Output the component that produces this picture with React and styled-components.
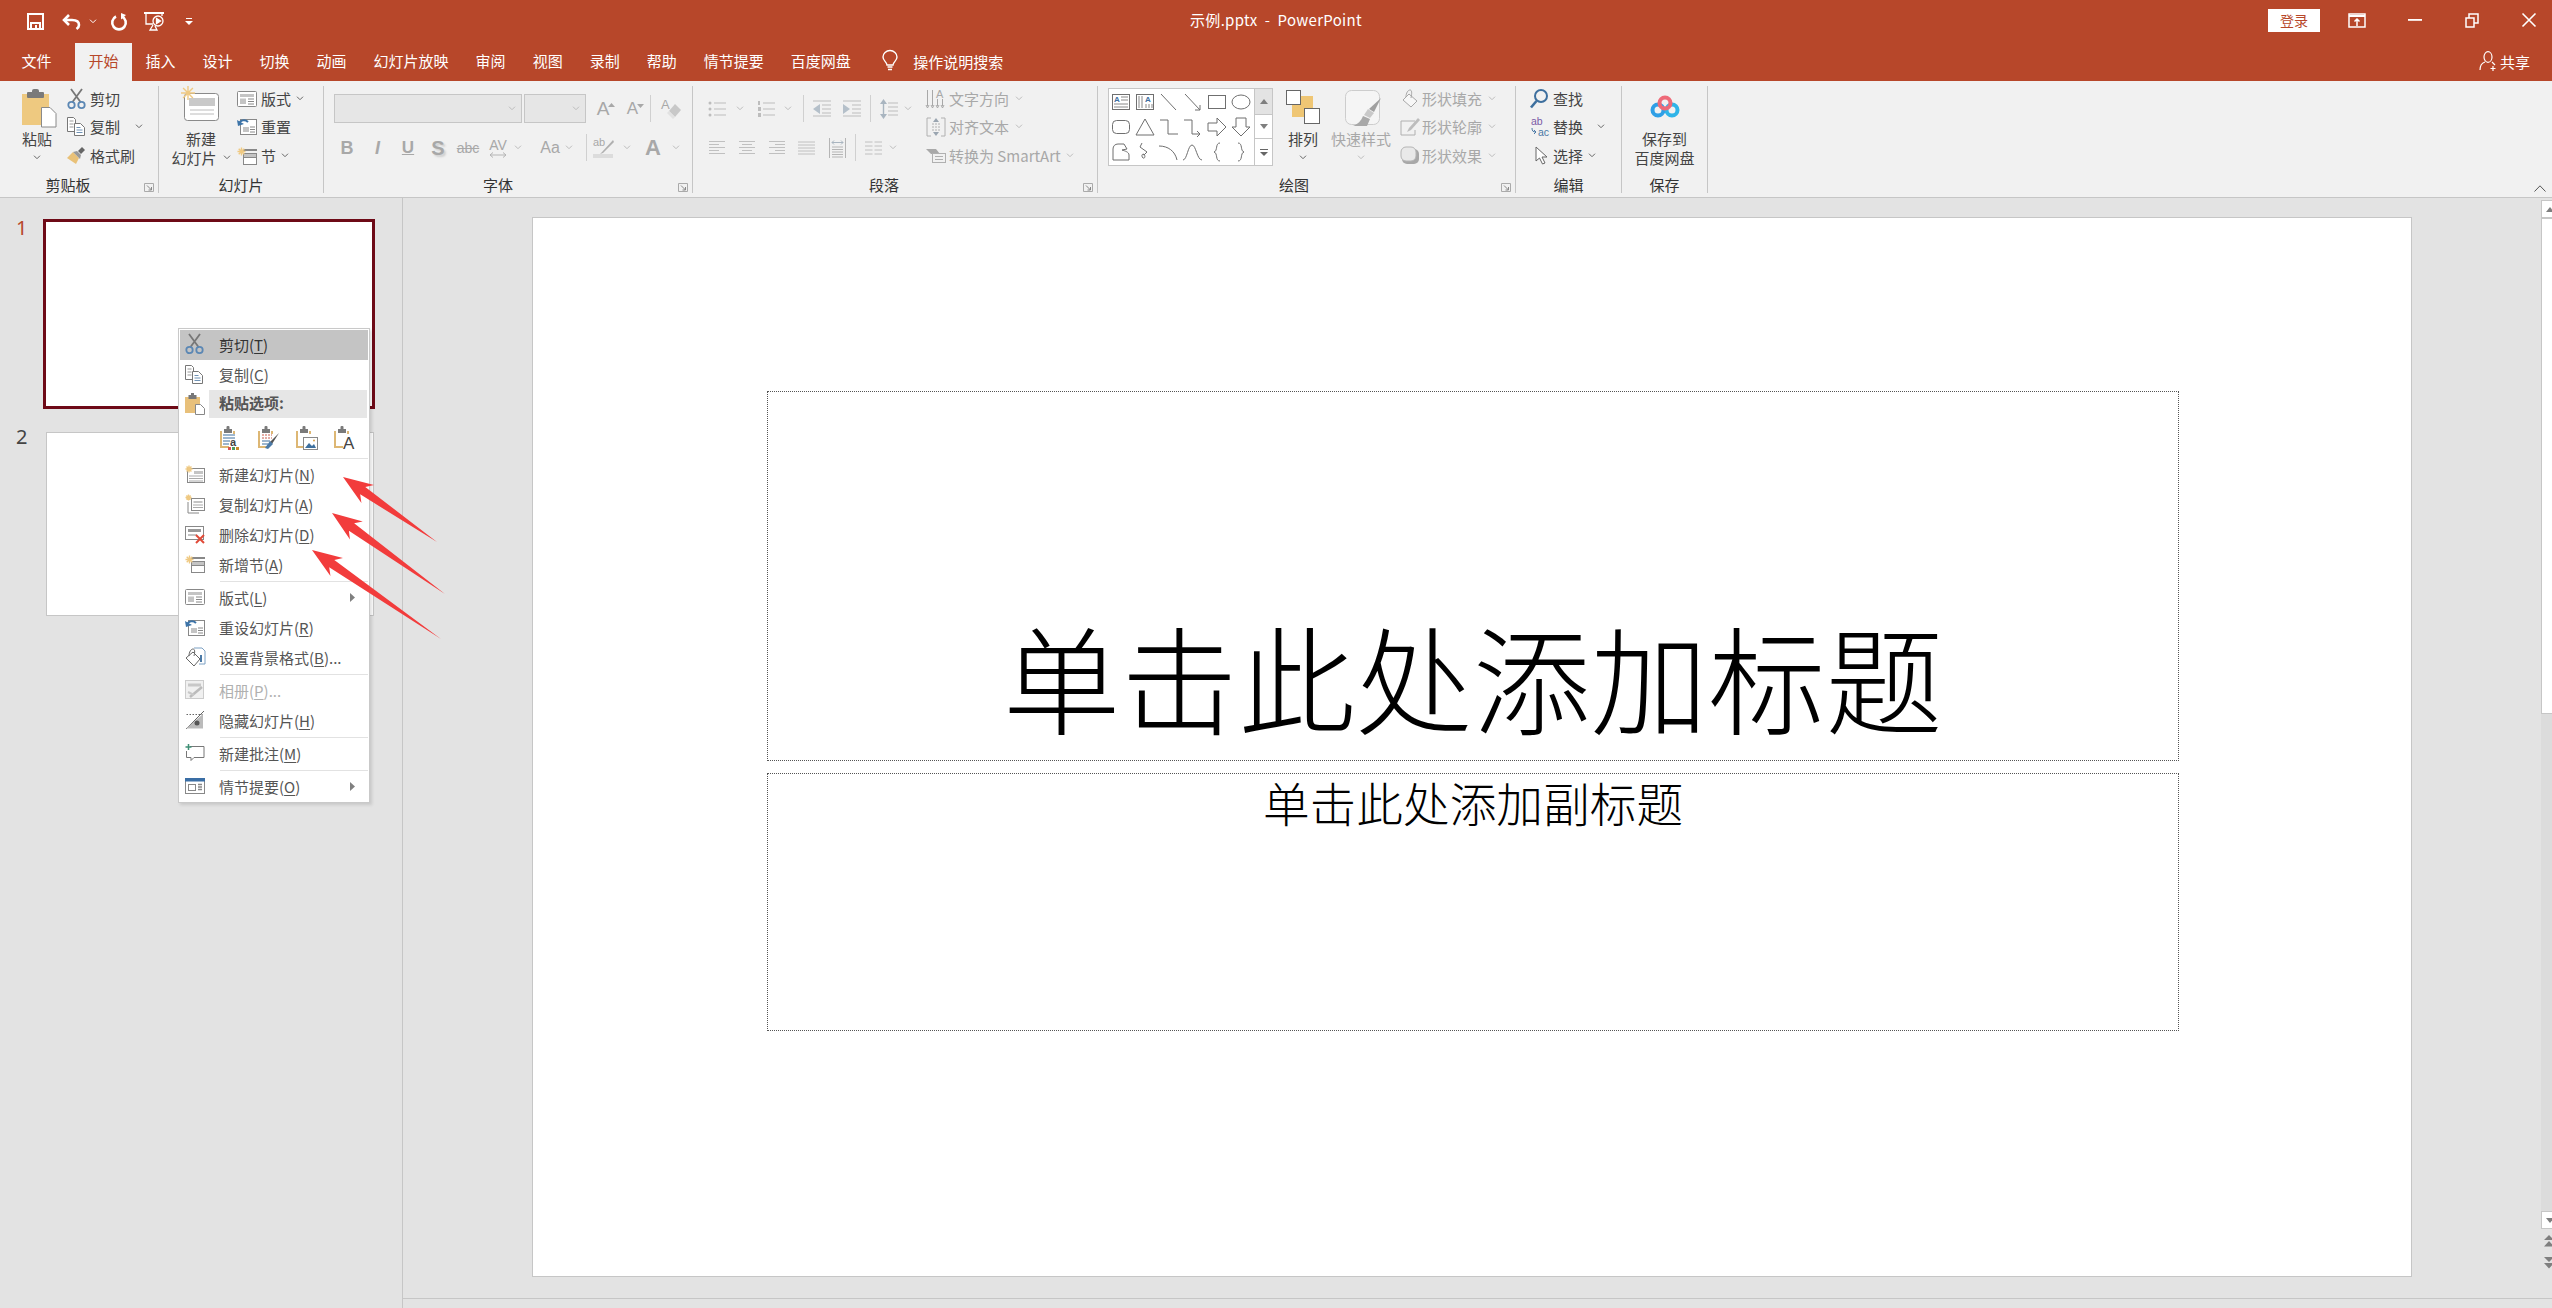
import React from "react";
import styled, { createGlobalStyle } from "styled-components";

const FONT = `"Noto Sans CJK SC","Noto Sans",sans-serif`;
const RUST = "#b7472a";
const LINE = "#c6c6c6";
const OFF = "#a8a8a8";
const ON = "#444";

const Global = createGlobalStyle`
  html,body{margin:0;padding:0;background:#e3e3e3;overflow:hidden;}
  *{box-sizing:border-box;}
`;

const Page = styled.div`
  width:2552px;height:1308px;position:relative;overflow:hidden;display:flex;flex-direction:column;
  font-family:${FONT};font-size:15px;color:${ON};background:#e3e3e3;
`;
const Ico = styled.svg`display:block;flex-shrink:0;overflow:visible;`;

/* ---------- title bar ---------- */
const TitleBar = styled.header`
  height:43px;background:${RUST};color:#fff;display:grid;grid-template-columns:1fr auto 1fr;align-items:center;
`;
const QuickAccess = styled.div`display:flex;align-items:center;padding-left:27px;`;
const QuickSlot = styled.span`display:flex;margin-left:${p=>p.$ml||0}px;`;
const DocTitle = styled.div`font-size:15px;line-height:20px;margin-top:-3px;white-space:pre;letter-spacing:.3px;`;
const WindowControls = styled.div`display:flex;align-items:center;justify-content:flex-end;padding-right:16px;`;
const SignIn = styled.button`
  width:52px;height:23px;border:0;background:#fff;color:${RUST};font:14px/23px ${FONT};padding:0;margin-top:-3px;
`;
const ControlSlot = styled.span`display:flex;margin-left:${p=>p.$ml}px;margin-top:-3px;`;

/* ---------- tab row ---------- */
const TabBar = styled.nav`height:38px;background:${RUST};display:flex;align-items:stretch;padding-left:8px;position:relative;`;
const Tab = styled.div`
  padding:0 13.5px;line-height:36px;white-space:nowrap;color:${p=>p.$active?RUST:"#fff"};
  background:${p=>p.$active?"#f1f1f1":"transparent"};margin-right:${p=>p.$mr||0}px;
`;
const SearchTell = styled.div`display:flex;align-items:center;margin-left:18px;color:#fff;gap:15px;height:36px;`;
const ShareBox = styled.div`margin-left:auto;display:flex;align-items:center;color:#fff;gap:2px;padding-right:22px;height:36px;`;

/* ---------- ribbon ---------- */
const Ribbon = styled.section`
  height:117px;background:#f1f1f1;border-bottom:1px solid ${LINE};display:flex;align-items:flex-start;padding:5px 6px 0 0;
`;
const Group = styled.div`
  width:${p=>p.$w}px;height:107px;border-right:1px solid ${LINE};flex-shrink:0;position:relative;display:flex;flex-direction:column;
`;
const GroupBody = styled.div`height:90px;flex-shrink:0;display:flex;align-items:flex-start;`;
const GroupLabel = styled.div`
  line-height:18px;height:18px;text-align:center;padding-right:${p=>p.$pr||0}px;color:#333;
`;
const Launcher = styled.span`position:absolute;right:4px;bottom:1px;display:flex;`;
const Big = styled.div`
  width:${p=>p.$w}px;margin-left:${p=>p.$ml||0}px;margin-top:-1px;display:flex;flex-direction:column;align-items:center;flex-shrink:0;
  color:${p=>p.$off?OFF:ON};
`;
const BigLine = styled.div`height:18.5px;line-height:18px;display:flex;align-items:center;white-space:nowrap;gap:${p=>p.$gap||0}px;`;
const Stack = styled.div`
  margin-left:${p=>p.$ml||0}px;display:grid;grid-template-rows:25px 31px 27px;flex-shrink:0;
`;
const Row = styled.div`display:flex;align-items:center;color:${p=>p.$off?OFF:ON};white-space:nowrap;`;
const Slot = styled.span`width:${p=>p.$w}px;display:flex;align-items:center;flex-shrink:0;justify-content:${p=>p.$center?"center":"flex-start"};`;
const ChevWrap = styled.span`display:flex;margin-left:${p=>p.$ml||0}px;flex-shrink:0;`;

const ToolCol = styled.div`display:flex;flex-direction:column;padding-top:8px;flex-shrink:0;width:${p=>p.$w?p.$w+"px":"auto"};`;
const ToolRow = styled.div`height:29px;display:flex;align-items:center;margin-bottom:10px;padding-left:${p=>p.$pl||0}px;`;
const Combo = styled.div`
  width:${p=>p.$w}px;height:29px;background:#e6e6e6;border:1px solid ${LINE};margin-right:2px;display:flex;align-items:center;justify-content:flex-end;padding-right:5px;flex-shrink:0;
`;
const Tool = styled.span`
  width:${p=>p.$w}px;margin-left:${p=>p.$ml||0}px;display:flex;align-items:center;justify-content:center;flex-shrink:0;color:${OFF};position:relative;white-space:nowrap;
`;
const ToolBadge = styled.span`position:absolute;right:${p=>p.$r}px;top:${p=>p.$t}px;display:flex;`;
const VSep = styled.span`width:1px;height:27px;background:#d0d0d0;margin-left:${p=>p.$ml||0}px;flex-shrink:0;`;
const Glyph = styled.span`
  font-family:"Liberation Sans",sans-serif;font-size:${p=>p.$s}px;line-height:1;color:${p=>p.$c||OFF};
  font-weight:${p=>p.$b?700:400};font-style:${p=>p.$i?"italic":"normal"};
  text-decoration:${p=>p.$u?"underline":p.$x?"line-through":"none"};
  text-shadow:${p=>p.$sh?"2px 2px 2px #cfcfcf":"none"};
`;
const GlyphCol = styled.span`display:flex;flex-direction:column;align-items:center;`;

const Gallery = styled.div`
  width:165px;height:78px;margin:2px 0 0 10px;background:#fff;border:1px solid ${LINE};display:flex;flex-shrink:0;
`;
const ShapeGrid = styled.div`flex:1;display:grid;grid-template-columns:repeat(6,24px);grid-template-rows:repeat(3,25.3px);align-items:center;justify-items:center;`;
const GalleryScroll = styled.div`width:18px;border-left:1px solid ${LINE};display:grid;grid-template-rows:26px 24px 1fr;`;
const GalleryBtn = styled.span`
  display:flex;align-items:center;justify-content:center;background:${p=>p.$off?"#e3e3e3":"#fff"};border-bottom:${p=>p.$last?"0":`1px solid ${LINE}`};
`;
const RibbonCollapse = styled.span`margin-left:auto;align-self:flex-end;display:flex;margin-bottom:5px;`;

/* ---------- workspace ---------- */
const Work = styled.main`flex:1;display:flex;min-height:0;`;
const Side = styled.aside`width:403px;border-right:1px solid ${LINE};padding-top:21px;flex-shrink:0;`;
const ThumbRow = styled.div`display:flex;margin-bottom:${p=>p.$mb||0}px;`;
const ThumbNo = styled.div`
  width:${p=>p.$w}px;padding-left:16px;font:20px/28px "Noto Sans",sans-serif;margin-top:${p=>p.$mt||0}px;color:${p=>p.$c};flex-shrink:0;
`;
const Thumb = styled.div`
  width:${p=>p.$w}px;height:${p=>p.$h}px;background:#fff;border:${p=>p.$sel?"3px solid #6e0a17":`1px solid ${LINE}`};
`;
const Editor = styled.div`flex:1;display:flex;flex-direction:column;min-width:0;`;
const EditorMain = styled.div`flex:1;display:flex;min-height:0;`;
const Canvas = styled.div`flex:1;padding:19px 0 0 129px;min-width:0;`;
const Footer = styled.div`height:10px;border-top:1px solid ${LINE};`;
const Slide = styled.div`
  width:1880px;height:1060px;background:#fff;border:1px solid ${LINE};padding:173px 0 0 234px;
`;
const TitleBox = styled.div`
  width:1412px;height:370px;border:1px dotted #555;display:flex;align-items:flex-end;justify-content:center;
  font-size:117.500px;line-height:170px;font-weight:300;color:#000;white-space:nowrap;
`;
const SubBox = styled.div`
  width:1412px;height:258px;margin-top:12px;border:1px dotted #555;text-align:center;
  font-size:46.700px;line-height:56px;font-weight:300;color:#000;white-space:nowrap;
`;
const VScroll = styled.div`width:11px;flex-shrink:0;padding-top:2px;display:flex;flex-direction:column;overflow:hidden;`;
const VBtn = styled.div`
  width:16px;height:18px;background:#fff;border:1px solid ${LINE};display:flex;align-items:center;padding-left:3px;flex-shrink:0;
`;
const VThumb = styled.div`height:${p=>p.$h}px;width:16px;background:#fff;border:1px solid ${LINE};flex-shrink:0;`;
const VTrack = styled.div`flex:1;background:#dcdcdc;`;
const VPage = styled.div`height:${p=>p.$h}px;display:flex;align-items:flex-end;padding-left:3px;flex-shrink:0;`;

/* ---------- context menu ---------- */
const Menu = styled.div`
  position:absolute;left:178px;top:328px;width:192px;height:475px;background:#fff;border:1px solid #c9c9c9;
  padding:1px 1px;box-shadow:2px 2px 3px rgba(0,0,0,.12);
  font-size:15px;color:${ON};
`;
const MItem = styled.div`
  height:30px;padding-bottom:2px;display:flex;align-items:center;background:${p=>p.$hot?"#c4c4c4":"transparent"};color:${p=>p.$off?"#b0b0b0":p.$hot?"#333":"#555"};position:relative;white-space:nowrap;
`;
const MIcon = styled.span`width:39px;padding-left:5px;display:flex;flex-shrink:0;`;
const MSub = styled.span`position:absolute;right:13px;top:10px;display:flex;`;
const MPaste = styled.div`height:28px;display:flex;align-items:center;`;
const MPasteHead = styled.div`flex:1;height:28px;margin-left:-10px;padding-left:10px;background:#e6e6e6;font-weight:700;line-height:26px;color:#555;margin-right:1px;`;
const MPasteIcons = styled.div`height:39px;display:flex;gap:16px;padding:8px 0 0 40px;`;
const MSep = styled.div`height:1px;margin:1px 0 1px 40px;background:#e2e2e2;`;

const ArrowLayer = styled.svg`position:absolute;left:0;top:0;pointer-events:none;`;

/* ---------- icons ---------- */
const Chev = ({c="#666"}) => <Ico width="8" height="5" viewBox="0 0 8 5" fill="none" stroke={c} strokeWidth="1"><path d="M1 .7l3 3 3-3"/></Ico>;
const CO = () => <Chev c="#bdbdbd"/>;

const SaveI = () => <Ico width="17" height="17" viewBox="0 0 17 17" fill="none" stroke="#fff" strokeWidth="2"><path d="M1 1h15v15H1z"/><path d="M4 16v-6h9v6"/><path d="M9 12v3" strokeWidth="2"/></Ico>;
const UndoI = () => <Ico width="19" height="16" viewBox="0 0 19 16" fill="none" stroke="#fff" strokeWidth="2.6"><path d="M2 6h8c4 0 7 1.500 7 5 0 2-1 3-2.500 4"/><path d="M7 1L2 6l5 5"/></Ico>;
const RedoI = () => <Ico width="17" height="17" viewBox="0 0 17 17" fill="none" stroke="#fff" strokeWidth="2.6"><path d="M5 3.500a6.800 6.800 0 1 0 6 0"/><path d="M10 0v6.500L15 2z" fill="#fff" stroke="none"/></Ico>;
const ShowI = () => <Ico width="20" height="19" viewBox="0 0 20 19" fill="none" stroke="#fff" strokeWidth="1.300"><path d="M0 1h20" strokeWidth="2"/><path d="M2 1v11h7M18 1v3"/><circle cx="14" cy="9" r="5"/><path d="M12.500 6.500v5l4-2.500z" fill="#fff"/><path d="M9 13l-3 5h7l-2-4"/></Ico>;
const QatMore = () => <Ico width="8" height="7" viewBox="0 0 8 7" fill="#fff"><rect x="1" y="0" width="6" height="1"/><path d="M0 3h8L4 7z"/></Ico>;
const RibbonDisp = () => <Ico width="18" height="15" viewBox="0 0 18 15" fill="none" stroke="#fff" strokeWidth="1.500"><path d="M1 1h16v13H1z"/><path d="M1 3h16" strokeWidth="2"/><path d="M9 13V6M6.500 8.500L9 6l2.500 2.500"/></Ico>;
const MinI = () => <Ico width="14" height="2" viewBox="0 0 14 2"><rect width="14" height="1.800" fill="#fff"/></Ico>;
const RestoreI = () => <Ico width="14" height="15" viewBox="0 0 14 15" fill="none" stroke="#fff" strokeWidth="1.500"><path d="M1 5h8v9H1z"/><path d="M4 5V1h9v9h-4"/></Ico>;
const CloseI = () => <Ico width="14" height="14" viewBox="0 0 14 14" stroke="#fff" strokeWidth="1.600"><path d="M.5.5l13 13M13.500.5l-13 13"/></Ico>;
const PersonI = () => <Ico width="19" height="20" viewBox="0 0 19 20" fill="none" stroke="#fff" strokeWidth="1.200"><ellipse cx="9" cy="6" rx="4" ry="5.300"/><path d="M1 19c0-4 2-7 5-8M13 11l3 3"/><path d="M14 15v5M11.500 17.500h5"/></Ico>;
const BulbI = () => <Ico width="16" height="22" viewBox="0 0 16 22" fill="none" stroke="#fff" strokeWidth="1.400"><path d="M5 15c0-3-4-4-4-8a7 6.500 0 0 1 14 0c0 4-4 5-4 8z"/><path d="M5.500 17h5M6 19.500h4" strokeWidth="1.600"/></Ico>;

const Scissors = () => <Ico width="19" height="20" viewBox="0 0 19 20" fill="none" strokeWidth="1.800"><path d="M4 0l9.500 13M15 0L5.500 13" stroke="#777"/><circle cx="4.500" cy="16" r="3.200" stroke="#5b87b4"/><circle cx="14.500" cy="16" r="3.200" stroke="#5b87b4"/></Ico>;
const CopyI = () => <Ico width="18" height="19" viewBox="0 0 18 19" fill="none" stroke="#777" strokeWidth="1"><path d="M.5 .5h6l2 2v12H.5z" fill="#fff"/><path d="M2.500 4h4M2.500 7h4M2.500 10h4" stroke="#999"/><path d="M7.500 6.500h6l4 4v8h-10z" fill="#fff"/><path d="M9.500 10.500h4M9.500 13h6M9.500 15.500h6" stroke="#6f92b5"/></Ico>;
const Painter = () => <Ico width="18" height="17" viewBox="0 0 18 17"><path d="M0 11l6-6 6 6-3 6z" fill="#e9c178"/><path d="M6 5l4-1 4 4-1 4z" fill="#999"/><path d="M11 4l4-4 3 3-4 4z" fill="#666"/></Ico>;
const PasteBig = () => <Ico width="38" height="45" viewBox="0 0 38 45"><rect x="4" y="9" width="27" height="31" fill="#eec980"/><rect x="9" y="7" width="17" height="6" rx="1" fill="#7a7a7a"/><rect x="14" y="4" width="7" height="5" rx="2" fill="#7a7a7a"/><path d="M23.500 22.500h8.500l6 6v13.500h-14.500z" fill="#fff" stroke="#8a8a8a"/></Ico>;
const Star = ({x=0,y=0,r=6}) => <g stroke="#efc982" strokeWidth="1.400" transform={`translate(${x} ${y})`}><path d={`M${-r} 0H${r}M0 ${-r}V${r}M${-r*.7} ${-r*.7}L${r*.7} ${r*.7}M${-r*.7} ${r*.7}L${r*.7} ${-r*.7}`}/></g>;
const NewSlideBig = () => <Ico width="60" height="45" viewBox="0 0 60 45" fill="none"><rect x="13.500" y="8.500" width="34" height="27" rx="3" fill="#fff" stroke="#8a8a8a"/><rect x="18" y="13" width="26" height="8" fill="#c9c9c9"/><path d="M19 25h24M19 29h24" stroke="#bcbcbc"/><Star x={17} y={8} r={7}/></Ico>;
const LayoutI = () => <Ico width="20" height="16" viewBox="0 0 20 16" fill="none" stroke="#888"><rect x=".5" y=".5" width="19" height="15" rx="1" fill="#fff"/><rect x="3" y="3" width="14" height="3" fill="#c4c4c4" stroke="none"/><rect x="3" y="7.500" width="6" height="5.500" fill="#c4c4c4" stroke="none"/><path d="M11 8h6M11 10.500h6M11 13h6"/></Ico>;
const ResetI = () => <Ico width="20" height="17" viewBox="0 0 20 17" fill="none" stroke="#888"><rect x="3.500" y="1.500" width="16" height="15" fill="#fff"/><rect x="6" y="9" width="6" height="5" fill="#c4c4c4" stroke="none"/><path d="M13 9h5M13 11.500h5M13 14h5"/><path d="M2 6c1-4 6-5 9-2" stroke="#3d74a8" strokeWidth="2"/><path d="M0 2l1 6 6-2z" fill="#3d74a8" stroke="none"/></Ico>;
const SectionI = () => <Ico width="20" height="18" viewBox="0 0 20 18" fill="none" stroke="#888"><rect x="6.500" y="2.500" width="13" height="1" fill="#c4c4c4"/><rect x="6.500" y="6.500" width="13" height="4" fill="#c4c4c4"/><rect x="6.500" y="10.500" width="13" height="7" fill="#fff"/><Star x={4.500} y={4.500} r={4}/></Ico>;
const EraserI = () => <Ico width="20" height="22" viewBox="0 0 20 22" fill="none"><text x="0" y="11" fontSize="13" fill="#a8a8a8" fontFamily="Liberation Sans">A</text><path d="M14 6l6 6-6 7-6-6z" fill="#c8c8c8"/><path d="M8 13l6 6-2 2-6-6z" fill="#e2e2e2"/></Ico>;

const Bullets = ({n}) => <Ico width="18" height="18" viewBox="0 0 18 18" fill="none" stroke="#bdbdbd"><path d="M6 3h12M6 9h12M6 15h12"/>{n?<g fill="#bdbdbd" stroke="none"><rect x="1" y="1" width="2" height="4"/><rect x="1" y="7" width="3" height="4"/><rect x="1" y="13" width="3" height="4"/></g>:<g fill="#bdbdbd" stroke="none"><circle cx="2" cy="3" r="1.500"/><circle cx="2" cy="9" r="1.500"/><circle cx="2" cy="15" r="1.500"/></g>}</Ico>;
const Indent = ({out}) => <Ico width="18" height="17" viewBox="0 0 18 17" fill="none" stroke="#bdbdbd"><path d="M0 1h18M9 5h9M9 9h9M9 13h9M0 16h18" /><path d={out?"M7 4v10L0 9z":"M0 4v10l7-5z"} fill="#b5c0ca" stroke="none"/></Ico>;
const LineSp = () => <Ico width="18" height="20" viewBox="0 0 18 20" fill="none" stroke="#bdbdbd"><path d="M8 4h10M8 8h10M8 12h10M8 16h10"/><path d="M3.500 4v12" strokeWidth="1.400" stroke="#a9b5c0"/><path d="M3.500 0l3.500 5H0zM3.500 20L0 15h7z" fill="#a9b5c0" stroke="none"/></Ico>;
const ALIGN = {
  l:"M0 1.500h16M0 4.500h10M0 7.500h16M0 10.500h10M0 13.500h16",
  c:"M0 1.500h16M3 4.500h10M0 7.500h16M3 10.500h10M0 13.500h16",
  r:"M0 1.500h16M6 4.500h10M0 7.500h16M6 10.500h10M0 13.500h16",
};
const Align = ({k}) => <Ico width="16" height="15" viewBox="0 0 16 15" stroke="#c0c0c0"><path d={ALIGN[k]}/></Ico>;
const Justify = () => <Ico width="17" height="16" viewBox="0 0 17 16" stroke="#c0c0c0"><path d="M0 2h17M0 5h17M0 8h17M0 11h17M0 14h17"/></Ico>;
const Distribute = () => <Ico width="17" height="22" viewBox="0 0 17 22" fill="none" stroke="#b5b5b5"><path d="M.5 1v20M16.500 1v20"/><path d="M3 5.500h11M5 3.500L3 5.500l2 2M12 3.500l2 2-2 2" stroke="#a9b5c0"/><path d="M3 10h11M3 12.500h11M3 15h11M3 17.500h11M3 20h11"/></Ico>;
const Columns = () => <Ico width="17" height="14" viewBox="0 0 17 14" stroke="#c0c0c0"><path d="M0 1h7.500M9.500 1H17M0 5h7.500M9.500 5H17M0 9h7.500M9.500 9H17M0 13h7.500M9.500 13H17"/></Ico>;
const TextDir = () => <Ico width="19" height="20" viewBox="0 0 19 20" fill="none" stroke="#a8a8a8"><path d="M1.500 1v16M6.500 1v16M11.500 10v7M16.500 10v7"/><path d="M0 16l1.500 3 1.500-3M5 16l1.500 3 1.500-3M10 16l1.500 3 1.500-3M15 16l1.500 3 1.500-3" /><text x="10" y="9" fontSize="11" fill="#a8a8a8" stroke="none" fontFamily="Liberation Sans">A</text></Ico>;
const TextAlign = () => <Ico width="20" height="20" viewBox="0 0 20 20" fill="none" stroke="#b0b0b0"><path d="M5 1H1v18h4M15 1h4v18h-4"/><path d="M6 10h8M6 7h8M6 13h8" strokeDasharray="2 1"/><path d="M10 1l3 4H7zM10 19l-3-4h6z" fill="#9aa5b0" stroke="none"/></Ico>;
const SmartArtI = () => <Ico width="20" height="15" viewBox="0 0 20 15" fill="none" stroke="#b0b0b0"><path d="M0 1h10l4 5H5z" fill="#a9a9a9" stroke="none"/><rect x="6.500" y="5.500" width="13" height="9" fill="#f1f1f1"/><path d="M9 8.500h8M9 11.500h8"/></Ico>;

const Sh = ({children}) => <Ico width="22" height="20" viewBox="0 0 22 20" fill="none" stroke="#6f6f6f">{children}</Ico>;
const shapes = [
  <Sh key="a"><rect x="2.500" y="2.500" width="17" height="15" fill="#fff"/><text x="4" y="10" fontSize="8" fill="#3e6fa0" stroke="none" fontFamily="Liberation Sans" fontWeight="700">A</text><path d="M11 5h7M11 8h7M4 12h14M4 15h14" stroke="#888"/></Sh>,
  <Sh key="b"><rect x="2.500" y="2.500" width="17" height="15"/><path d="M5 4v12M8 4v12" stroke="#888"/><text x="11" y="10" fontSize="8" fill="#3e6fa0" stroke="none" fontFamily="Liberation Sans" fontWeight="700">A</text><path d="M12 12v4M15 12v4M18 12v4" stroke="#888"/></Sh>,
  <Sh key="c"><path d="M3 2l15 16"/></Sh>,
  <Sh key="d"><path d="M3 2l15 16M13 18h5v-5"/></Sh>,
  <Sh key="e"><rect x="2.500" y="3.500" width="17" height="13"/></Sh>,
  <Sh key="f"><ellipse cx="11" cy="10" rx="9" ry="7"/></Sh>,
  <Sh key="g"><rect x="2.500" y="3.500" width="17" height="13" rx="4"/></Sh>,
  <Sh key="h"><path d="M11 2l9 16H2z"/></Sh>,
  <Sh key="i"><path d="M2 3h8v14h10"/></Sh>,
  <Sh key="j"><path d="M2 3h8v14h8M15 14l3 3-3 3"/></Sh>,
  <Sh key="k"><path d="M2 6h9V1l9 9-9 9v-5H2z"/></Sh>,
  <Sh key="l"><path d="M6 1h10v9h4l-9 9-9-9h4z"/></Sh>,
  <Sh key="m"><path d="M3 18V7c0-3 2-5 5-5h6l3 5-5 1c3 1 7 2 7 5v5z"/></Sh>,
  <Sh key="n"><path d="M8 1l-2 4 7 5-3 3c-2-2-3 1-1 3 2 1 3-3 0-4"/></Sh>,
  <Sh key="o"><path d="M1 4c9 0 16 5 18 14"/></Sh>,
  <Sh key="p"><path d="M1 18C5 18 6 3 10 3s5 15 10 15"/></Sh>,
  <Sh key="q"><path d="M14 1c-5 0-2 8-6 9 4 1 1 9 6 9"/></Sh>,
  <Sh key="r"><path d="M8 1c5 0 2 8 6 9-4 1-1 9-6 9"/></Sh>,
];
const ArrangeI = () => <Ico width="36" height="45" viewBox="0 0 36 45"><rect x="7" y="11" width="21" height="21" fill="#efc674"/><rect x="1.500" y="5.500" width="14" height="14" fill="#fff" stroke="#666"/><rect x="19.500" y="23.500" width="15" height="15" fill="#fff" stroke="#666"/></Ico>;
const QuickI = () => <Ico width="60" height="45" viewBox="0 0 60 45" fill="none"><rect x="14.500" y="5.500" width="34" height="34" rx="6" stroke="#cdcdcd" fill="#f5f5f5"/><path d="M50 13l-7 14-5-3z" fill="#a0a0a0"/><path d="M37 24l6 4-4 5-6-3z" fill="#c8c8c8"/><path d="M32 31l7 3-3 7H22c5-2 8-5 10-10z" fill="#a8a8a8"/></Ico>;
const FillI = () => <Ico width="20" height="20" viewBox="0 0 20 20" fill="none" stroke="#a8a8a8"><path d="M9 5l8 7-6 6-8-7z" fill="#f7f7f7"/><path d="M6 8c0-4 2-7 4-7s2 3 1 8"/></Ico>;
const OutlineI = () => <Ico width="21" height="20" viewBox="0 0 21 20" fill="none" stroke="#b0b0b0"><path d="M1 4h14M1 4v14h14v-5"/><path d="M18 1L9 11l-2 4 4-2L20 3z" fill="#bdbdbd" stroke="none"/></Ico>;
const EffectI = () => <Ico width="20" height="19" viewBox="0 0 20 19"><rect x="2" y="3" width="17" height="15" rx="5" fill="#a8a8a8"/><rect x="1" y="1" width="15" height="14" rx="5" fill="#e9e9e9" stroke="#b5b5b5"/></Ico>;
const FindI = () => <Ico width="18" height="20" viewBox="0 0 18 20" fill="none" stroke="#3d6f9e" strokeWidth="2"><circle cx="11" cy="7" r="6"/><path d="M6.500 12L1 18.500" strokeWidth="2.600"/></Ico>;
const ReplaceI = () => <Ico width="20" height="20" viewBox="0 0 20 20" fill="none"><text x="1" y="8" fontSize="10.500" fill="#7a5ba6" fontFamily="Liberation Sans">ab</text><text x="8" y="19" fontSize="10.500" fill="#4b79a6" fontFamily="Liberation Sans">ac</text><path d="M2 11c0 3 1 4 4 4M4 13l2 2-2 2" stroke="#4b79a6"/></Ico>;
const CursorI = () => <Ico width="13" height="19" viewBox="0 0 13 19" fill="#fff" stroke="#666"><path d="M1 1v14l3.500-3 3 6 2.500-1-3-6h5z"/></Ico>;
const Launch = () => <Ico width="10" height="9" viewBox="0 0 10 9" fill="none" stroke="#aaa"><path d="M.5 8.500v-8h9v8z"/><path d="M3 2.500l4.500 4.500M7.500 4v3H4.500" stroke="#888"/></Ico>;
const BaiduI = () => <Ico width="60" height="45" viewBox="0 0 60 45" fill="none" strokeWidth="4"><circle cx="23" cy="25" r="5.500" stroke="#2f9fe6"/><circle cx="37" cy="25" r="5.500" stroke="#2fb4e8"/><circle cx="30" cy="18" r="5.500" stroke="#ee6a78"/></Ico>;

const MenuNew = () => <Ico width="20" height="19" viewBox="0 0 20 19" fill="none" stroke="#888"><rect x="2.500" y="3.500" width="17" height="14" fill="#fff"/><rect x="9" y="6" width="9" height="3" fill="#c4c4c4" stroke="none"/><path d="M4 11h14M4 13.500h14M4 16h14" stroke="#aaa"/><Star x={4} y={4} r={3.500}/></Ico>;
const MenuDup = () => <Ico width="20" height="20" viewBox="0 0 20 20" fill="none" stroke="#888"><path d="M3 8v11h11" /><rect x="6.500" y="4.500" width="13" height="12" fill="#fff"/><rect x="8.500" y="7" width="9" height="2" fill="#c4c4c4" stroke="none"/><path d="M8 11h10M8 13.500h10" stroke="#aaa"/><Star x={3.500} y={3.500} r={3}/></Ico>;
const MenuDel = () => <Ico width="20" height="19" viewBox="0 0 20 19" fill="none" stroke="#888"><rect x=".5" y="1.500" width="18" height="13" fill="#fff"/><rect x="3" y="4" width="13" height="3" fill="#999" stroke="none"/><path d="M3 10h9"/><path d="M11 10l8 8M19 10l-8 8" stroke="#e04a38" strokeWidth="2"/></Ico>;
const MenuBg = () => <Ico width="20" height="20" viewBox="0 0 20 20" fill="none" stroke="#666"><path d="M9 1h8l3 3v13h-6" stroke="#7da1c4"/><path d="M8 5l7 7-6 7-8-8z" fill="#fff"/><path d="M4 9c0-4 2-7 4-7s2 3 1 7" /><path d="M16 8v7" stroke="#4b79a6" strokeWidth="2"/></Ico>;
const MenuAlbum = () => <Ico width="20" height="20" viewBox="0 0 20 20" fill="none" stroke="#ccc"><rect x=".5" y=".5" width="18" height="18" fill="#f0f0f0"/><path d="M3 5h13" strokeWidth="3" stroke="#c8c8c8"/><path d="M5 17L17 7" strokeWidth="2.500" stroke="#bbb"/><path d="M3 12l6 3" stroke="#c8c8c8" strokeWidth="2"/></Ico>;
const MenuHide = () => <Ico width="20" height="20" viewBox="0 0 20 20" fill="none" stroke="#666"><path d="M1.500 4.500h16v14" strokeDasharray="1.500 1.500"/><path d="M1 19L19 1"/><path d="M1 18.500h17V4z" fill="#bbb" stroke="none"/><circle cx="12" cy="13" r="2.500" fill="#555" stroke="none"/></Ico>;
const MenuComment = () => <Ico width="20" height="18" viewBox="0 0 20 18" fill="none" stroke="#777"><path d="M5 2.500h14v11H9l-3 3v-3H1.500V7"/><path d="M3.500 0v6M.5 3h6" stroke="#3f8f75" strokeWidth="1.500"/></Ico>;
const MenuOutline = () => <Ico width="20" height="16" viewBox="0 0 20 16" fill="none" stroke="#888"><rect x=".5" y=".5" width="19" height="15" fill="#fff"/><rect x="0" y="0" width="20" height="3.500" fill="#3a6ea5" stroke="none"/><rect x="3.500" y="6.500" width="7" height="6"/><path d="M13 6.500h4M13 9h4M13 11.500h4" strokeWidth="1.400"/></Ico>;
const MenuPaste = () => <Ico width="20" height="22" viewBox="0 0 20 22"><path d="M0 4h15v16H0z" fill="#e8c07a"/><rect x="3.500" y="2" width="8" height="4" fill="#777"/><rect x="6" y="0" width="3" height="3" fill="#777"/><path d="M10.500 11.500h5l4 4v6h-9z" fill="#fff" stroke="#888"/></Ico>;
const Clip = ({children}) => <Ico width="22" height="24" viewBox="0 0 22 24" fill="none"><path d="M1 5v16h8M14 5v3" stroke="#ddb774" strokeWidth="2"/><rect x="4" y="3" width="8" height="4" fill="#7a7a7a"/><rect x="6.500" y="0" width="3" height="4" rx="1" fill="#7a7a7a"/>{children}</Ico>;
const P1 = () => <Clip><path d="M3 9h12M3 12h12M3 15h7M3 18h6" stroke="#3d6f9e"/><text x="10" y="20" fontSize="11" fontWeight="700" fill="#444" fontFamily="Liberation Sans">a</text><rect x="8" y="21" width="3" height="3" fill="#d9534f"/><rect x="12" y="21" width="3" height="3" fill="#4e9a5c"/><rect x="16" y="21" width="3" height="3" fill="#c88a2a"/></Clip>;
const P2 = () => <Clip><path d="M4 9h10M4 12h10" stroke="#c85a4a" strokeDasharray="2 1"/><path d="M4 15h8M4 18h6" stroke="#3d6f9e"/><path d="M21 7L12 16l2 2z" fill="#555"/><path d="M12 15l3 3-5 5-3-1z" fill="#4b79a6"/></Clip>;
const P3 = () => <Clip><rect x="7.500" y="11.500" width="14" height="12" fill="#fff" stroke="#888"/><path d="M9 22l4-5 3 3 2-2 2 4z" fill="#3d6f9e"/><circle cx="18" cy="14.500" r="1" fill="#d8a24a"/></Clip>;
const P4 = () => <Clip><text x="9" y="23" fontSize="17" fill="#444" fontFamily="Liberation Sans">A</text></Clip>;

const Tri = ({up,dbl}) => <Ico width="10" height={dbl?12:7} viewBox={dbl?"0 0 10 12":"0 0 10 7"} fill="#7f7f7f">
  {dbl ? (up ? <path d="M5 0l5 5H0zM5 6l5 5.500H0z"/> : <path d="M0 0h10L5 5zM0 6h10l-5 5.500z"/>) : (up ? <path d="M5 1l4 5H1z"/> : <path d="M1 1h8L5 6z"/>)}
</Ico>;
const TinyTri = ({up}) => <Ico width="7" height="4" viewBox="0 0 7 4" fill="#a8a8a8"><path d={up?"M3.500 0L7 4H0z":"M0 0h7L3.500 4z"}/></Ico>;
const QatMoreDark = () => <Ico width="8" height="7" viewBox="0 0 8 7" fill="#666"><rect x="0" y="0" width="8" height="1"/><path d="M0 3h8L4 7z"/></Ico>;
const SubArrow = () => <Ico width="5" height="9" viewBox="0 0 5 9" fill="#808080"><path d="M0 0l5 4.500L0 9z"/></Ico>;

/* arrows from tip to tail, computed from the end points */
const arrowPoints = ([tx,ty],[ex,ey]) => {
  const dx=ex-tx, dy=ey-ty, len=Math.hypot(dx,dy), ux=dx/len, uy=dy/len, nx=-uy, ny=ux;
  const at=(a,b)=>`${tx+ux*a+nx*b},${ty+uy*a+ny*b}`;
  return [at(0,0),at(30,11),at(24,4.500),`${ex},${ey}`,at(24,-4.500),at(30,-11)].join(" ");
};
const arrows = [[[343,477],[437,542]],[[332,513],[445,594]],[[312,550],[441,639]]];

const U = styled.u`text-underline-offset:2px;`;
const mi = (t,k,tail="") => <>{t}(<U>{k}</U>){tail}</>;

export default function App(){
  return (
    <Page>
      <Global/>
      <TitleBar>
        <QuickAccess>
          <QuickSlot><SaveI/></QuickSlot>
          <QuickSlot $ml={18}><UndoI/></QuickSlot>
          <QuickSlot $ml={8}><Chev c="#fff"/></QuickSlot>
          <QuickSlot $ml={14}><RedoI/></QuickSlot>
          <QuickSlot $ml={16}><ShowI/></QuickSlot>
          <QuickSlot $ml={21}><QatMore/></QuickSlot>
        </QuickAccess>
        <DocTitle>示例.pptx  -  PowerPoint</DocTitle>
        <WindowControls>
          <SignIn>登录</SignIn>
          <ControlSlot $ml={28}><RibbonDisp/></ControlSlot>
          <ControlSlot $ml={42}><MinI/></ControlSlot>
          <ControlSlot $ml={43}><RestoreI/></ControlSlot>
          <ControlSlot $ml={43}><CloseI/></ControlSlot>
        </WindowControls>
      </TitleBar>
      <TabBar>
        <Tab $mr={10}>文件</Tab>
        <Tab $active>开始</Tab>
        {["插入","设计","切换","动画","幻灯片放映","审阅","视图","录制","帮助","情节提要","百度网盘"].map(t=><Tab key={t}>{t}</Tab>)}
        <SearchTell><BulbI/>操作说明搜索</SearchTell>
        <ShareBox><PersonI/>共享</ShareBox>
      </TabBar>

      <Ribbon>
        <Group $w={159}>
          <GroupBody>
            <Big $w={38} $ml={18}>
              <PasteBig/>
              <BigLine>粘贴</BigLine>
              <BigLine><Chev/></BigLine>
            </Big>
            <Stack $ml={11}>
              <Row><Slot $w={23}><Scissors/></Slot>剪切</Row>
              <Row><Slot $w={23}><CopyI/></Slot>复制<ChevWrap $ml={15}><Chev/></ChevWrap></Row>
              <Row><Slot $w={23}><Painter/></Slot>格式刷</Row>
            </Stack>
          </GroupBody>
          <GroupLabel $pr={22}>剪贴板</GroupLabel>
          <Launcher><Launch/></Launcher>
        </Group>

        <Group $w={165}>
          <GroupBody>
            <Big $w={60} $ml={12}>
              <NewSlideBig/>
              <BigLine>新建</BigLine>
              <BigLine $gap={6}>幻灯片<Chev/></BigLine>
            </Big>
            <Stack $ml={6}>
              <Row><Slot $w={24}><LayoutI/></Slot>版式<ChevWrap $ml={5}><Chev/></ChevWrap></Row>
              <Row><Slot $w={24}><ResetI/></Slot>重置</Row>
              <Row><Slot $w={24}><SectionI/></Slot>节<ChevWrap $ml={5}><Chev/></ChevWrap></Row>
            </Stack>
          </GroupBody>
          <GroupLabel>幻灯片</GroupLabel>
        </Group>

        <Group $w={369}>
          <GroupBody>
            <ToolCol>
              <ToolRow $pl={10}>
                <Combo $w={188}><CO/></Combo>
                <Combo $w={62}><CO/></Combo>
                <Tool $w={30}><Glyph $s={19}>A</Glyph><ToolBadge $r={3} $t={4}><TinyTri up/></ToolBadge></Tool>
                <Tool $w={29}><Glyph $s={17}>A</Glyph><ToolBadge $r={3} $t={4}><TinyTri/></ToolBadge></Tool>
                <VSep $ml={3}/>
                <Tool $w={20} $ml={10}><EraserI/></Tool>
              </ToolRow>
              <ToolRow $pl={8}>
                <Tool $w={30}><Glyph $s={18} $b>B</Glyph></Tool>
                <Tool $w={31}><Glyph $s={18} $b $i>I</Glyph></Tool>
                <Tool $w={30}><Glyph $s={17} $b $u>U</Glyph></Tool>
                <Tool $w={30}><Glyph $s={20} $b $sh>S</Glyph></Tool>
                <Tool $w={30}><Glyph $s={14} $x>abc</Glyph></Tool>
                <Tool $w={30}><GlyphCol><Glyph $s={14}>AV</Glyph><Ico width="18" height="6" viewBox="0 0 18 6" fill="none" stroke="#b5b5b5"><path d="M1 3h16M4 .5L1 3l3 2.500M14 .5L17 3l-3 2.500"/></Ico></GlyphCol></Tool>
                <Tool $w={8} $ml={1}><CO/></Tool>
                <Tool $w={30} $ml={13}><Glyph $s={16}>Aa</Glyph></Tool>
                <Tool $w={8} $ml={0}><CO/></Tool>
                <VSep $ml={13}/>
                <Tool $w={22} $ml={6}><Ico width="22" height="21" viewBox="0 0 22 21" fill="none"><text x="0" y="9" fontSize="11" fill="#a8a8a8" fontFamily="Liberation Sans">ab</text><path d="M20 3L9 15l-2 2 3-1L21 5z" fill="#b0b0b0"/><rect x="0" y="17" width="20" height="4" fill="#dcdcdc"/></Ico></Tool>
                <Tool $w={8} $ml={8}><CO/></Tool>
                <Tool $w={22} $ml={11}><Glyph $s={22} $b>A</Glyph></Tool>
                <Tool $w={8} $ml={8}><CO/></Tool>
              </ToolRow>
            </ToolCol>
          </GroupBody>
          <GroupLabel $pr={20}>字体</GroupLabel>
          <Launcher><Launch/></Launcher>
        </Group>

        <Group $w={405}>
          <GroupBody>
            <ToolCol $w={233}>
              <ToolRow $pl={15}>
                <Tool $w={18}><Bullets/></Tool><Tool $w={8} $ml={10}><CO/></Tool>
                <Tool $w={18} $ml={13}><Bullets n/></Tool><Tool $w={8} $ml={9}><CO/></Tool>
                <VSep $ml={11}/>
                <Tool $w={18} $ml={9}><Indent out/></Tool><Tool $w={18} $ml={12}><Indent/></Tool>
                <VSep $ml={9}/>
                <Tool $w={18} $ml={9}><LineSp/></Tool><Tool $w={8} $ml={6}><CO/></Tool>
              </ToolRow>
              <ToolRow>
                <Tool $w={16} $ml={16}><Align k="l"/></Tool><Tool $w={16} $ml={14}><Align k="c"/></Tool>
                <Tool $w={16} $ml={14}><Align k="r"/></Tool><Tool $w={17} $ml={13}><Justify/></Tool>
                <Tool $w={17} $ml={14}><Distribute/></Tool>
                <VSep $ml={9}/>
                <Tool $w={17} $ml={9}><Columns/></Tool><Tool $w={8} $ml={7}><CO/></Tool>
              </ToolRow>
            </ToolCol>
            <Stack>
              <Row $off><Slot $w={23}><TextDir/></Slot>文字方向<ChevWrap $ml={6}><CO/></ChevWrap></Row>
              <Row $off><Slot $w={23}><TextAlign/></Slot>对齐文本<ChevWrap $ml={6}><CO/></ChevWrap></Row>
              <Row $off><Slot $w={23}><SmartArtI/></Slot>转换为 SmartArt<ChevWrap $ml={5}><CO/></ChevWrap></Row>
            </Stack>
          </GroupBody>
          <GroupLabel $pr={22}>段落</GroupLabel>
          <Launcher><Launch/></Launcher>
        </Group>

        <Group $w={418}>
          <GroupBody>
            <Gallery>
              <ShapeGrid>{shapes}</ShapeGrid>
              <GalleryScroll>
                <GalleryBtn $off><Tri up/></GalleryBtn>
                <GalleryBtn><Tri/></GalleryBtn>
                <GalleryBtn $last><QatMoreDark/></GalleryBtn>
              </GalleryScroll>
            </Gallery>
            <Big $w={36} $ml={12}>
              <ArrangeI/>
              <BigLine>排列</BigLine>
              <BigLine><Chev/></BigLine>
            </Big>
            <Big $w={60} $ml={10} $off>
              <QuickI/>
              <BigLine>快速样式</BigLine>
              <BigLine><CO/></BigLine>
            </Big>
            <Stack $ml={9}>
              <Row $off><Slot $w={22}><FillI/></Slot>形状填充<ChevWrap $ml={6}><CO/></ChevWrap></Row>
              <Row $off><Slot $w={22}><OutlineI/></Slot>形状轮廓<ChevWrap $ml={6}><CO/></ChevWrap></Row>
              <Row $off><Slot $w={22}><EffectI/></Slot>形状效果<ChevWrap $ml={6}><CO/></ChevWrap></Row>
            </Stack>
          </GroupBody>
          <GroupLabel $pr={25}>绘图</GroupLabel>
          <Launcher><Launch/></Launcher>
        </Group>

        <Group $w={106}>
          <GroupBody>
            <Stack $ml={14}>
              <Row><Slot $w={23}><FindI/></Slot>查找</Row>
              <Row><Slot $w={23}><ReplaceI/></Slot>替换<ChevWrap $ml={14}><Chev/></ChevWrap></Row>
              <Row><Slot $w={23} $center><CursorI/></Slot>选择<ChevWrap $ml={5}><Chev/></ChevWrap></Row>
            </Stack>
          </GroupBody>
          <GroupLabel>编辑</GroupLabel>
        </Group>

        <Group $w={86}>
          <GroupBody>
            <Big $w={85}>
              <BaiduI/>
              <BigLine>保存到</BigLine>
              <BigLine>百度网盘</BigLine>
            </Big>
          </GroupBody>
          <GroupLabel>保存</GroupLabel>
        </Group>

        <RibbonCollapse><Ico width="12" height="7" viewBox="0 0 12 7" fill="none" stroke="#555"><path d="M.5 6.500L6 .8l5.500 5.700"/></Ico></RibbonCollapse>
      </Ribbon>

      <Work>
        <Side>
          <ThumbRow $mb={23}>
            <ThumbNo $w={43} $mt={-5} $c={RUST}>1</ThumbNo>
            <Thumb $w={332} $h={190} $sel/>
          </ThumbRow>
          <ThumbRow>
            <ThumbNo $w={46} $mt={-9} $c={ON}>2</ThumbNo>
            <Thumb $w={328} $h={184}/>
          </ThumbRow>
        </Side>
        <Editor>
          <EditorMain>
            <Canvas>
              <Slide>
                <TitleBox>单击此处添加标题</TitleBox>
                <SubBox>单击此处添加副标题</SubBox>
              </Slide>
            </Canvas>
            <VScroll>
              <VBtn><Tri up/></VBtn>
              <VThumb $h={496}/>
              <VTrack/>
              <VBtn><Tri/></VBtn>
              <VPage $h={18}><Tri up dbl/></VPage>
              <VPage $h={22}><Tri dbl/></VPage>
              <VPage $h={29}/>
            </VScroll>
          </EditorMain>
          <Footer/>
        </Editor>
      </Work>

      <Menu>
        <MItem $hot><MIcon><Scissors/></MIcon>{mi("剪切","T")}</MItem>
        <MItem><MIcon><CopyI/></MIcon>{mi("复制","C")}</MItem>
        <MPaste><MIcon><MenuPaste/></MIcon><MPasteHead>粘贴选项:</MPasteHead></MPaste>
        <MPasteIcons><P1/><P2/><P3/><P4/></MPasteIcons>
        <MSep/>
        <MItem><MIcon><MenuNew/></MIcon>{mi("新建幻灯片","N")}</MItem>
        <MItem><MIcon><MenuDup/></MIcon>{mi("复制幻灯片","A")}</MItem>
        <MItem><MIcon><MenuDel/></MIcon>{mi("删除幻灯片","D")}</MItem>
        <MItem><MIcon><SectionI/></MIcon>{mi("新增节","A")}</MItem>
        <MSep/>
        <MItem><MIcon><LayoutI/></MIcon>{mi("版式","L")}<MSub><SubArrow/></MSub></MItem>
        <MItem><MIcon><ResetI/></MIcon>{mi("重设幻灯片","R")}</MItem>
        <MItem><MIcon><MenuBg/></MIcon>{mi("设置背景格式","B","...")}</MItem>
        <MSep/>
        <MItem $off><MIcon><MenuAlbum/></MIcon>{mi("相册","P","...")}</MItem>
        <MItem><MIcon><MenuHide/></MIcon>{mi("隐藏幻灯片","H")}</MItem>
        <MSep/>
        <MItem><MIcon><MenuComment/></MIcon>{mi("新建批注","M")}</MItem>
        <MSep/>
        <MItem><MIcon><MenuOutline/></MIcon>{mi("情节提要","O")}<MSub><SubArrow/></MSub></MItem>
      </Menu>

      <ArrowLayer width="2552" height="1308" viewBox="0 0 2552 1308">
        {arrows.map((a,i)=><polygon key={i} points={arrowPoints(a[0],a[1])} fill="#f23c3c"/>)}
      </ArrowLayer>
    </Page>
  );
}
